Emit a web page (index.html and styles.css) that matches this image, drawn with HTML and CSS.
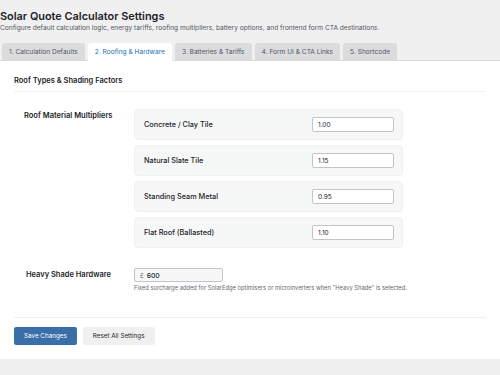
FILE: index.html
```html
<!DOCTYPE html>
<html lang="en">
<head>
    <meta charset="UTF-8">
    <meta name="viewport" content="width=device-width, initial-scale=1.0">
    <title>Solar Quote Calculator Settings</title>
    <link rel="stylesheet" href="styles.css">
</head>
<body>
    <div class="wrap">
        <h1>Solar Quote Calculator Settings</h1>
        <p class="intro">Configure default calculation logic, energy tariffs, roofing multipliers, battery options, and frontend form CTA destinations.</p>

        <nav class="tabs">
            <a href="#" class="tab">1. Calculation Defaults</a>
            <a href="#" class="tab active">2. Roofing &amp; Hardware</a>
            <a href="#" class="tab">3. Batteries &amp; Tariffs</a>
            <a href="#" class="tab">4. Form UI &amp; CTA Links</a>
            <a href="#" class="tab">5. Shortcode</a>
        </nav>

        <form class="card" autocomplete="off">
            <h2 class="section-title">Roof Types &amp; Shading Factors</h2>

            <div class="field">
                <div class="field-label">Roof Material Multipliers</div>
                <div class="roof-list">
                    <div class="roof-row">
                        <span>Concrete / Clay Tile</span>
                        <input type="text" class="mult-input" value="1.00">
                    </div>
                    <div class="roof-row">
                        <span>Natural Slate Tile</span>
                        <input type="text" class="mult-input" value="1.15">
                    </div>
                    <div class="roof-row">
                        <span>Standing Seam Metal</span>
                        <input type="text" class="mult-input" value="0.95">
                    </div>
                    <div class="roof-row">
                        <span>Flat Roof (Ballasted)</span>
                        <input type="text" class="mult-input" value="1.10">
                    </div>
                </div>
            </div>

            <div class="field field-shade">
                <div class="field-label">Heavy Shade Hardware</div>
                <div>
                    <div class="money">
                        <span class="currency">£</span>
                        <input type="text" class="money-input" value="600">
                    </div>
                    <p class="help">Fixed surcharge added for SolarEdge optimisers or microinverters when "Heavy Shade" is selected.</p>
                </div>
            </div>

            <div class="actions">
                <button type="button" class="btn btn-primary">Save Changes</button>
                <button type="button" class="btn btn-secondary">Reset All Settings</button>
            </div>
        </form>
    </div>
</body>
</html>
```

FILE: styles.css
```css
body {
    margin: 0;
    padding: 0;
    background-color: #f0f0f1;
    font-family: Inter, "Liberation Sans", Arial, sans-serif;
    color: #1d2327;
}
.wrap {
    padding-top: 9px;
}
h1 {
    margin: 0;
    font-size: 10.9px;
    line-height: 14px;
    font-weight: 600;
    color: #1d2327;
}
.intro {
    margin: 1px 0 0;
    font-size: 6.6px;
    line-height: 9px;
    color: #50575e;
}
.tabs {
    display: flex;
    gap: 3px;
    margin-top: 10px;
    padding-left: 2px;
    border-bottom: 1px solid #dcdcde;
}
.tab {
    display: block;
    height: 18px;
    line-height: 18px;
    padding: 0 7px;
    margin-bottom: -1px;
    background-color: #dcdcde;
    color: #50575e;
    font-size: 6.6px;
    font-weight: 400;
    text-decoration: none;
    border-radius: 3px 3px 0 0;
}
.tab.active {
    background-color: #fff;
    color: #2271b1;
}
.card {
    background-color: #fff;
    padding: 15px 14px 14px;
    box-shadow: 0 1px 1px rgba(0, 0, 0, 0.04);
}
.section-title {
    margin: 0;
    padding-bottom: 5px;
    border-bottom: 1px solid #f0f0f1;
    font-size: 7.5px;
    line-height: 10px;
    font-weight: 600;
}
.field {
    display: flex;
    margin-top: 17px;
}
.field-label {
    width: 110px;
    padding-left: 10px;
    padding-top: 2px;
    font-size: 7.5px;
    line-height: 10px;
    font-weight: 600;
}
.roof-list {
    display: flex;
    flex-direction: column;
    gap: 5px;
    width: 269px;
}
.roof-row {
    display: flex;
    align-items: center;
    justify-content: space-between;
    height: 31px;
    box-sizing: border-box;
    padding: 0 8px 0 9px;
    background-color: #f6f7f7;
    border: 1px solid #f0f0f1;
    border-radius: 4px;
    font-size: 7.3px;
    font-weight: 500;
}
.mult-input {
    width: 82px;
    height: 15px;
    box-sizing: border-box;
    padding: 0 5px;
    border: 1px solid #c3c4c7;
    border-radius: 2px;
    font-family: inherit;
    font-size: 6.5px;
    color: #1d2327;
}
.field-shade {
    margin-top: 20px;
}
.field-shade .field-label {
    padding-left: 12px;
    width: 108px;
}
.money {
    display: flex;
    align-items: center;
    width: 89px;
    height: 14px;
    box-sizing: border-box;
    padding-left: 5px;
    background-color: #f6f7f7;
    border: 1px solid #c3c4c7;
    border-radius: 2px;
}
.currency {
    font-size: 6px;
    color: #646970;
}
.money-input {
    flex: 1;
    min-width: 0;
    border: none;
    background: transparent;
    padding: 0 0 0 3px;
    font-family: inherit;
    font-size: 6.8px;
    font-weight: 500;
    color: #1d2327;
}
.help {
    margin: 2px 0 0;
    font-size: 5.8px;
    line-height: 8px;
    color: #646970;
}
.actions {
    display: flex;
    gap: 6px;
    margin-top: 25px;
    padding-top: 9px;
    border-top: 1px solid #f0f0f1;
}
.btn {
    height: 18px;
    padding: 0 10px;
    border: none;
    border-radius: 2px;
    font-family: inherit;
    font-size: 6.3px;
    white-space: nowrap;
    cursor: pointer;
}
.btn-primary {
    background-color: #3a6ea8;
    color: #fff;
}
.btn-secondary {
    background-color: #f0f0f1;
    color: #1d2327;
}
```
